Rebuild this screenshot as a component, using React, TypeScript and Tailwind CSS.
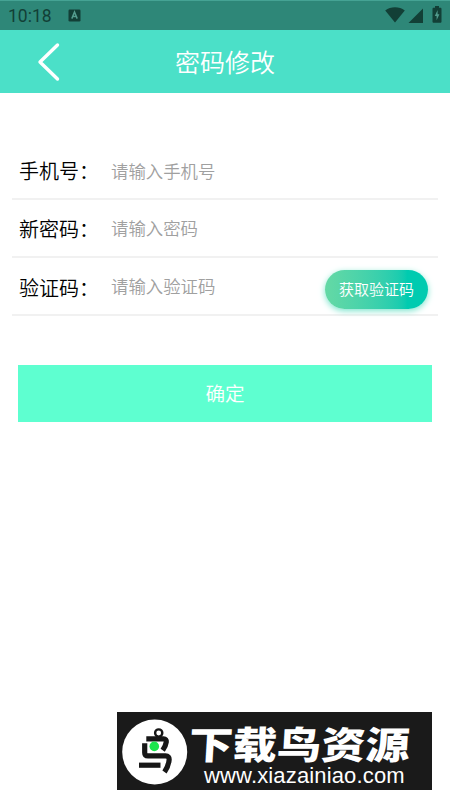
import React from 'react';

const FIELDS = [
  { id: 'phone', label: '手机号：', placeholder: '请输入手机号', labelShift: 'pt-0.5', hintShift: '' },
  { id: 'password', label: '新密码：', placeholder: '请输入密码', labelShift: 'pt-px', hintShift: 'pb-px' },
  { id: 'code', label: '验证码：', placeholder: '请输入验证码', labelShift: 'pt-[3px]', hintShift: 'pb-px' },
];

function StatusBar() {
  return (
    <div className="flex h-[30px] items-center border-t border-[#45a394] bg-[#2e8778] pl-2 text-[#123f36]">
      <span className="w-[60px] pt-0.5 font-['Roboto','Noto_Sans',sans-serif] text-[17.5px] leading-none">10:18</span>
      <svg width="13" height="13" viewBox="0 0 13 13" className="-mt-px">
        <rect x="0.5" y="0.5" width="12" height="12" rx="1.2" fill="currentColor" />
        <path d="M3.8 9.6 6.5 3 9.2 9.6M4.7 7.6h3.6" fill="none" stroke="#549c8e" strokeWidth="1.5" />
      </svg>
      <div className="ml-auto flex h-full items-start pr-2">
        <svg width="20" height="16" viewBox="0 0 20 16" className="mt-1.5" fill="currentColor">
          <path d="M.2 3.4C5.8-.8 14.2-.8 19.8 3.4L10 15.5Z" />
        </svg>
        <svg width="15" height="15" viewBox="0 0 15 15" className="ml-[3px] mt-[7px]" fill="currentColor">
          <path d="M15 .5V15H.5Z" />
        </svg>
        <svg width="10" height="17" viewBox="0 0 10 17" className="ml-[9px] mt-[5px]">
          <path d="M3 0h4v1.7h1.2c.9 0 1.3.5 1.3 1.3v12.5c0 .8-.4 1.3-1.3 1.3H1.8c-.9 0-1.3-.5-1.3-1.3V3c0-.8.4-1.3 1.3-1.3H3Z" fill="currentColor" />
          <path d="M5.6 4 2.8 10h1.8v4.2L7.4 8.3H5.6Z" fill="#519b8c" />
        </svg>
      </div>
    </div>
  );
}

function Header() {
  return (
    <header className="grid h-[63px] grid-cols-[75px_1fr_75px] items-center bg-[#4be0c8] text-white">
      <button aria-label="返回" className="flex justify-end pr-[14px]">
        <svg width="24" height="40" viewBox="0 0 24 40" fill="none" stroke="currentColor" strokeWidth="3.4" strokeLinecap="round" strokeLinejoin="round">
          <path d="M20.5 3 3 20l17.5 17" />
        </svg>
      </button>
      <h1 className="text-center text-[25px] font-[350] leading-none">密码修改</h1>
    </header>
  );
}

function SiteBanner() {
  return (
    <div className="mr-[18px] mt-auto flex h-[78px] w-[315px] self-end bg-[#1a1a1a] text-white">
      <svg width="66" height="66" viewBox="0 0 66 66" className="ml-[5px] mt-[7px] shrink-0">
        <circle cx="32.7" cy="33" r="32.5" fill="white" />
        <g fill="none" stroke="#171717" strokeWidth="5.2">
          <circle cx="36.7" cy="14" r="3.6" strokeWidth="2.4" />
          <path d="M24.3 19.9h17.2q3.2 0 2.8 3-.6 4.2-3.6 8.4" />
          <path d="M22.7 24.3v9.4q0 3.2 3.3 3.2h17.5q4 0 3.6 4-.6 6.4-4.6 12" />
          <path d="M17 46.2h21.5" />
        </g>
        <circle cx="32.3" cy="27.4" r="4.8" fill="#1ce64d" />
      </svg>
      <div className="flex flex-col pl-[2px] pt-[13px]">
        <div className="h-[39px] w-[223px] origin-top-left -skew-x-3 scale-y-[0.86] whitespace-nowrap text-[44.2px] font-black leading-[42px]">下载鸟资源</div>
        <div className="pl-[14px] font-['Liberation_Sans',Arial,sans-serif] text-[22px] leading-[23px] tracking-[0.15px]">www.xiazainiao.com</div>
      </div>
    </div>
  );
}

export default function App() {
  return (
    <div className="flex h-[800px] w-[450px] flex-col overflow-hidden bg-white pb-2.5 font-['Noto_Sans_CJK_SC',sans-serif]">
      <StatusBar />
      <Header />

      <form className="mx-[12px] mt-[49px]">
        {FIELDS.map(field => (
          <div key={field.id} className="flex h-[58px] items-center border-b-2 border-[#f1f1f1] pl-[7px]">
            <label htmlFor={field.id} className={`w-[92px] shrink-0 whitespace-nowrap text-[20px] font-[350] leading-none text-black ${field.labelShift}`}>
              {field.label}
            </label>
            <input
              id={field.id}
              placeholder={field.placeholder}
              className={`h-8 w-[207px] text-[17.4px] font-[350] outline-none placeholder:text-[#a0a0a0] ${field.hintShift}`}
            />
            {field.id === 'code' && (
              <button type="button" className="ml-[7px] mt-1.5 h-[39px] w-[103px] shrink-0 rounded-full bg-linear-to-r from-[#64d9a5] to-[#00cbb0] to-80% pb-0.5 text-[15px] font-[350] leading-none text-white shadow-[0_2px_6px_#7de5ce]">
                获取验证码
              </button>
            )}
          </div>
        ))}
      </form>

      <button className="mx-[18px] mt-[49px] h-[57px] bg-[#5effd0] pb-0.5 text-[19.6px] font-[350] leading-none text-white">确定</button>

      <SiteBanner />
    </div>
  );
}
